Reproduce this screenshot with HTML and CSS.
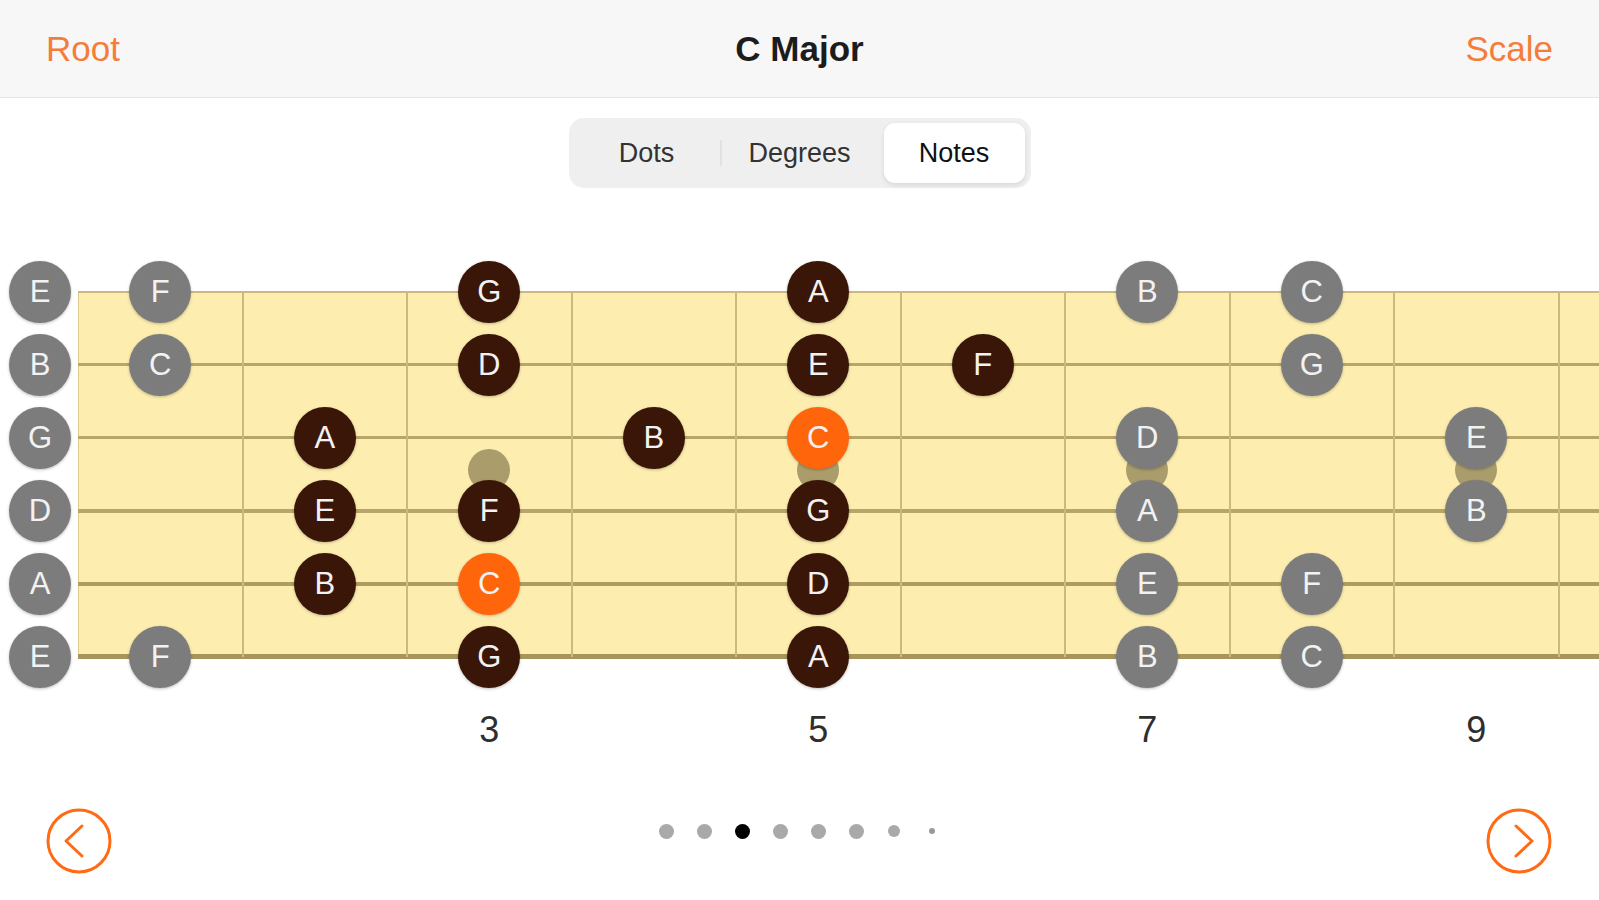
FILE: index.html
```html
<!DOCTYPE html>
<html lang="en">
<head>
    <meta charset="UTF-8">
    <meta name="viewport" content="width=device-width, initial-scale=1.0">
    <title>C Major</title>
    <link rel="stylesheet" href="styles.css">
</head>
<body>
    <header class="topbar">
        <a class="nav-link">Root</a>
        <h1 class="title">C Major</h1>
        <a class="nav-link right">Scale</a>
    </header>

    <div class="mode-row">
        <div class="segmented">
            <span class="segment dots-seg">Dots</span>
            <span class="segment degrees-seg">Degrees</span>
            <span class="segment notes-seg active">Notes</span>
        </div>
    </div>

    <div class="fretboard">
        <div class="board"></div>
        <div class="fret c2"></div>
        <div class="fret c3"></div>
        <div class="fret c4"></div>
        <div class="fret c5"></div>
        <div class="fret c6"></div>
        <div class="fret c7"></div>
        <div class="fret c8"></div>
        <div class="fret c9"></div>
        <div class="fret c10"></div>

        <div class="string s1"></div>
        <div class="string s2"></div>
        <div class="string s3"></div>
        <div class="string s4"></div>
        <div class="string s5"></div>
        <div class="string s6"></div>

        <div class="inlay c4"></div>
        <div class="inlay c6"></div>
        <div class="inlay c8"></div>
        <div class="inlay c10"></div>

        <!-- high E -->
        <span class="note off s1 c1">E</span>
        <span class="note off s1 c2">F</span>
        <span class="note on s1 c4">G</span>
        <span class="note on s1 c6">A</span>
        <span class="note off s1 c8">B</span>
        <span class="note off s1 c9">C</span>
        <!-- B -->
        <span class="note off s2 c1">B</span>
        <span class="note off s2 c2">C</span>
        <span class="note on s2 c4">D</span>
        <span class="note on s2 c6">E</span>
        <span class="note on s2 c7">F</span>
        <span class="note off s2 c9">G</span>
        <!-- G -->
        <span class="note off s3 c1">G</span>
        <span class="note on s3 c3">A</span>
        <span class="note on s3 c5">B</span>
        <span class="note root s3 c6">C</span>
        <span class="note off s3 c8">D</span>
        <span class="note off s3 c10">E</span>
        <!-- D -->
        <span class="note off s4 c1">D</span>
        <span class="note on s4 c3">E</span>
        <span class="note on s4 c4">F</span>
        <span class="note on s4 c6">G</span>
        <span class="note off s4 c8">A</span>
        <span class="note off s4 c10">B</span>
        <!-- A -->
        <span class="note off s5 c1">A</span>
        <span class="note on s5 c3">B</span>
        <span class="note root s5 c4">C</span>
        <span class="note on s5 c6">D</span>
        <span class="note off s5 c8">E</span>
        <span class="note off s5 c9">F</span>
        <!-- low E -->
        <span class="note off s6 c1">E</span>
        <span class="note off s6 c2">F</span>
        <span class="note on s6 c4">G</span>
        <span class="note on s6 c6">A</span>
        <span class="note off s6 c8">B</span>
        <span class="note off s6 c9">C</span>

        <span class="fret-num c4">3</span>
        <span class="fret-num c6">5</span>
        <span class="fret-num c8">7</span>
        <span class="fret-num c10">9</span>
    </div>

    <div class="pager">
        <button class="arrow" aria-label="Previous">
            <svg width="66" height="66" viewBox="0 0 66 66">
                <circle cx="33" cy="33" r="31" fill="none" stroke="#ff6a14" stroke-width="3"/>
                <path d="M36 18 L20 33 L36 48" fill="none" stroke="#ff6a14" stroke-width="3" stroke-linecap="round" stroke-linejoin="round"/>
            </svg>
        </button>
        <div class="dots">
            <span class="dot"></span>
            <span class="dot"></span>
            <span class="dot active"></span>
            <span class="dot"></span>
            <span class="dot"></span>
            <span class="dot"></span>
            <span class="dot small"></span>
            <span class="dot tiny"></span>
        </div>
        <button class="arrow" aria-label="Next">
            <svg width="66" height="66" viewBox="0 0 66 66">
                <circle cx="33" cy="33" r="31" fill="none" stroke="#ff6a14" stroke-width="3"/>
                <path d="M30 18 L46 33 L30 48" fill="none" stroke="#ff6a14" stroke-width="3" stroke-linecap="round" stroke-linejoin="round"/>
            </svg>
        </button>
    </div>
</body>
</html>
```

FILE: styles.css
```css
body {
    margin: 0;
    font-family: "Liberation Sans", Arial, sans-serif;
    background: #fff;
    color: #222;
    overflow: hidden;
}

/* top bar */
.topbar {
    display: grid;
    grid-template-columns: 1fr auto 1fr;
    align-items: center;
    height: 97px;
    padding: 0 46px;
    background: #f7f7f7;
    border-bottom: 1px solid #e4e4e4;
}
.nav-link {
    font-size: 35px;
    color: #f57d3a;
}
.nav-link.right {
    justify-self: end;
}
.title {
    margin: 0;
    font-size: 35px;
    font-weight: 600;
    color: #1c1c1c;
}

/* Dots / Degrees / Notes */
.mode-row {
    display: flex;
    justify-content: center;
    margin-top: 20px;
}
.segmented {
    display: flex;
    padding: 5px 6px 5px 5px;
    background: #efefef;
    border-radius: 15px;
}
.segment {
    position: relative;
    height: 60px;
    display: flex;
    align-items: center;
    justify-content: center;
    font-size: 27px;
    color: #333;
    border-radius: 11px;
}
.dots-seg { width: 146px; }
.degrees-seg { width: 160px; }
.notes-seg { width: 141px; margin-left: 4px; }
.degrees-seg::before {
    content: "";
    position: absolute;
    left: 0;
    top: 17px;
    bottom: 17px;
    width: 2px;
    background: #e2e2e2;
}
.segment.active {
    background: #fff;
    color: #111;
    box-shadow: 0 2px 5px rgba(0, 0, 0, 0.1);
}

/* fretboard */
.fretboard {
    display: grid;
    grid-template-columns: 78px repeat(9, 164.5px) 1fr;
    grid-template-rows: repeat(7, 73px);
    margin-top: 67px;
}
.board {
    grid-column: 2 / -1;
    grid-row: 1 / 7;
    margin: 36.5px 0;
    background: #fdeeb0;
    border-left: 1px solid #dccb8c;
}
.fret {
    grid-row: 1 / 7;
    margin: 36.5px 0;
    justify-self: end;
    width: 2px;
    background: #cdb97b;
    transform: translateX(1px);
}
.string {
    grid-column: 2 / -1;
    align-self: center;
    background: #b8a56a;
}
.string.s1 { height: 2px; background: #cbb97e; }
.string.s2 { height: 3px; }
.string.s3 { height: 3px; }
.string.s4 { height: 4px; }
.string.s5 { height: 4px; background: #af9c61; }
.string.s6 { height: 5px; background: #a8955b; }
.inlay {
    grid-row: 3 / 5;
    align-self: center;
    justify-self: center;
    width: 42px;
    height: 42px;
    margin-bottom: 8px;
    border-radius: 50%;
    background: #ab9d6b;
}

.s1 { grid-row: 1; }
.s2 { grid-row: 2; }
.s3 { grid-row: 3; }
.s4 { grid-row: 4; }
.s5 { grid-row: 5; }
.s6 { grid-row: 6; }
.c1 { grid-column: 1; }
.c2 { grid-column: 2; }
.c3 { grid-column: 3; }
.c4 { grid-column: 4; }
.c5 { grid-column: 5; }
.c6 { grid-column: 6; }
.c7 { grid-column: 7; }
.c8 { grid-column: 8; }
.c9 { grid-column: 9; }
.c10 { grid-column: 10; }

.note {
    width: 62px;
    height: 62px;
    align-self: center;
    justify-self: center;
    display: flex;
    align-items: center;
    justify-content: center;
    border-radius: 50%;
    font-size: 31px;
    color: #f2f2f2;
    box-shadow: 0 1px 3px rgba(0, 0, 0, 0.25);
}
.note.off { background: #7c7c7c; }
.note.on { background: #3a1609; }
.note.root { background: #ff650a; }
.note.c1 { justify-self: start; margin-left: 9px; }

.fret-num {
    grid-row: 7;
    align-self: center;
    justify-self: center;
    font-size: 36px;
    color: #2e2e2e;
}

/* bottom pager */
.pager {
    display: flex;
    align-items: center;
    justify-content: space-between;
    margin-top: 42px;
    padding: 0 47px 0 46px;
}
.arrow {
    width: 66px;
    height: 66px;
    padding: 0;
    border: none;
    background: none;
}
.arrow svg {
    display: block;
}
.dots {
    display: flex;
    align-items: center;
    margin-bottom: 20px;
}
.dot {
    width: 15px;
    height: 15px;
    margin: 0 11.5px;
    border-radius: 50%;
    background: #a9a9a9;
}
.dot.active { background: #000; }
.dot.small { width: 12px; height: 12px; margin: 0 13px; }
.dot.tiny { width: 6px; height: 6px; margin: 0 16px; background: #999; }
```
